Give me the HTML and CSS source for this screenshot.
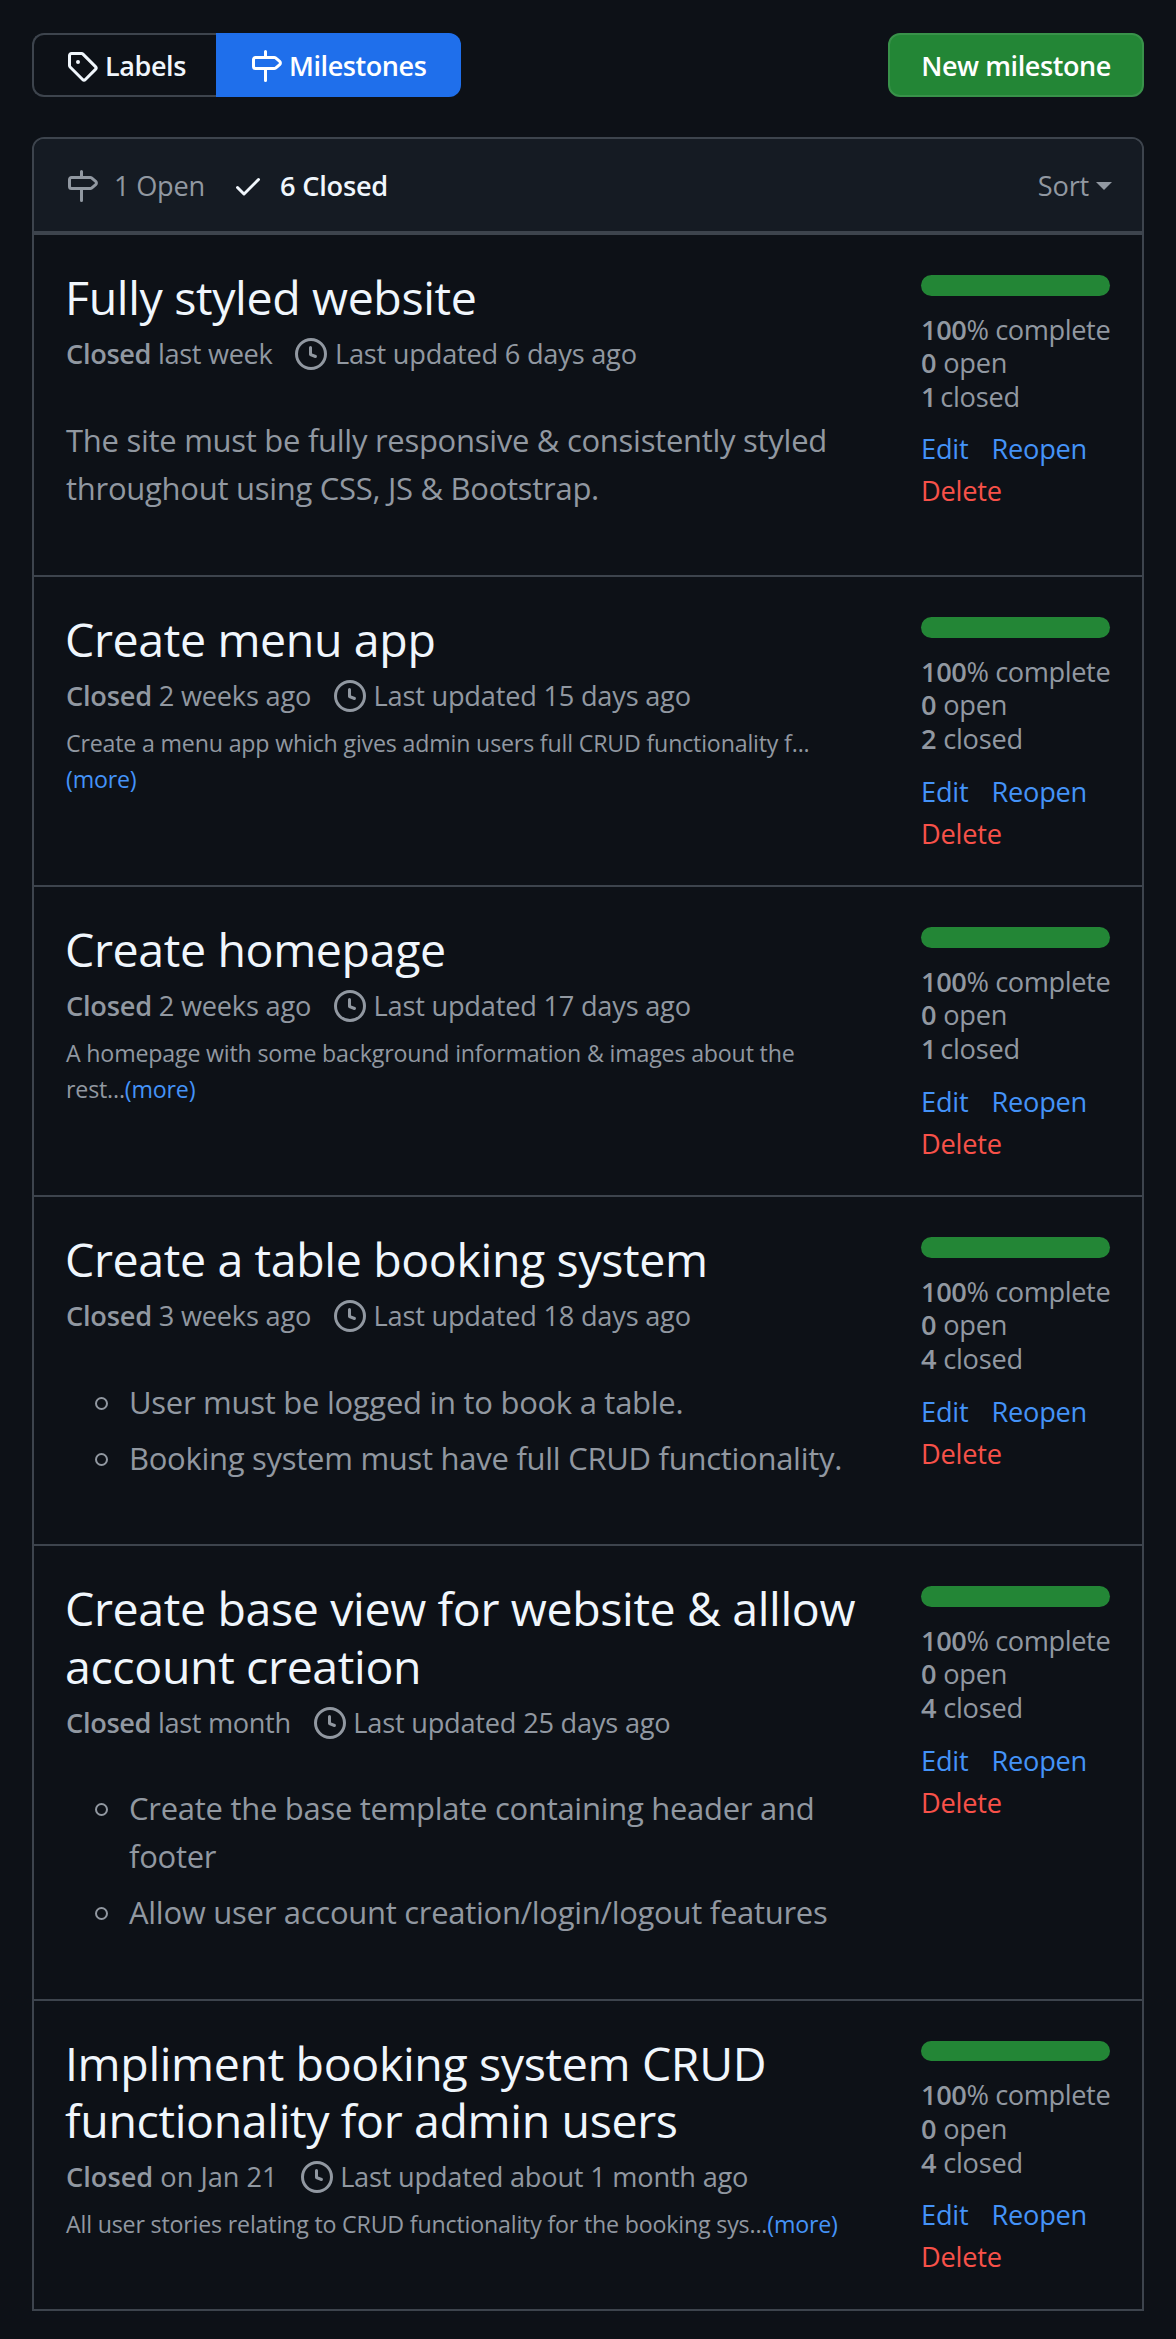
FILE: index.html
```html
<!DOCTYPE html>
<html lang="en">
<head>
<meta charset="utf-8">
<title>Milestones</title>
<link rel="stylesheet" href="styles.css">
</head>
<body>
<svg class="sprite" aria-hidden="true">
  <symbol id="tag" viewBox="0 0 16 16"><path d="M1 7.775V2.75C1 1.784 1.784 1 2.75 1h5.025c.464 0 .91.184 1.238.513l6.25 6.25a1.75 1.75 0 0 1 0 2.474l-5.026 5.026a1.75 1.75 0 0 1-2.474 0l-6.25-6.25A1.752 1.752 0 0 1 1 7.775Zm1.5 0c0 .066.026.13.073.177l6.25 6.25a.25.25 0 0 0 .354 0l5.025-5.025a.25.25 0 0 0 0-.354l-6.25-6.25a.25.25 0 0 0-.177-.073H2.75a.25.25 0 0 0-.25.25ZM6 5a1 1 0 1 1 0 2 1 1 0 0 1 0-2Z"/></symbol>
  <symbol id="milestone" viewBox="0 0 16 16"><path d="M7.75 0a.75.75 0 0 1 .75.75V3h3.634c.414 0 .814.147 1.13.414l2.07 1.75a1.75 1.75 0 0 1 0 2.672l-2.07 1.75a1.75 1.75 0 0 1-1.13.414H8.5v5.25a.75.75 0 0 1-1.5 0V10H2.75A1.75 1.75 0 0 1 1 8.25v-3.5C1 3.784 1.784 3 2.75 3H7V.75A.75.75 0 0 1 7.75 0Zm4.384 8.5a.25.25 0 0 0 .161-.06l2.07-1.75a.248.248 0 0 0 0-.38l-2.07-1.75a.25.25 0 0 0-.161-.06H2.75a.25.25 0 0 0-.25.25v3.5c0 .138.112.25.25.25h9.384Z"/></symbol>
  <symbol id="check" viewBox="0 0 16 16"><path d="M13.78 4.22a.75.75 0 0 1 0 1.06l-7.25 7.25a.75.75 0 0 1-1.06 0L2.22 9.28a.751.751 0 0 1 .018-1.042.751.751 0 0 1 1.042-.018L6 10.94l6.72-6.72a.75.75 0 0 1 1.06 0Z"/></symbol>
  <symbol id="clock" viewBox="0 0 16 16"><path d="M8 0a8 8 0 1 1 0 16A8 8 0 0 1 8 0ZM1.5 8a6.5 6.5 0 1 0 13 0 6.5 6.5 0 0 0-13 0Zm7-3.25v2.992l2.028.812a.75.75 0 0 1-.557 1.392l-2.5-1A.751.751 0 0 1 7 8.25v-3.5a.75.75 0 0 1 1.5 0Z"/></symbol>
</svg>

<header class="toolbar">
  <nav class="subnav">
    <a class="subnav-item"><svg class="icon"><use href="#tag"/></svg><span>Labels</span></a>
    <a class="subnav-item selected"><svg class="icon"><use href="#milestone"/></svg><span>Milestones</span></a>
  </nav>
  <a class="new-button">New milestone</a>
</header>

<main class="box">
  <div class="box-header">
    <a class="state open"><svg class="icon"><use href="#milestone"/></svg><span>1 Open</span></a>
    <a class="state closed"><svg class="icon"><use href="#check"/></svg><span>6 Closed</span></a>
    <a class="sort"><span>Sort</span><i class="caret"></i></a>
  </div>

  <section class="row">
    <div class="info">
      <h2>Fully styled website</h2>
      <div class="meta"><span class="tight"><b>Closed</b> last week</span><svg class="icon"><use href="#clock"/></svg><span>Last updated 6 days ago</span></div>
      <div class="body"><p>The site must be fully responsive &amp; consistently styled throughout using CSS, JS &amp; Bootstrap.</p></div>
    </div>
    <div class="stats">
      <div class="progress"></div>
      <div class="percent"><b>100</b>% complete</div>
      <div><b>0</b> open</div>
      <div><b class="one">1</b> closed</div>
      <div class="actions"><a>Edit</a><a>Reopen</a><a class="delete">Delete</a></div>
    </div>
  </section>

  <section class="row">
    <div class="info">
      <h2>Create menu app</h2>
      <div class="meta"><span><b>Closed</b> 2 weeks ago</span><svg class="icon"><use href="#clock"/></svg><span>Last updated 15 days ago</span></div>
      <p class="short">Create a menu app which gives admin users full CRUD functionality f...<br><a>(more)</a></p>
    </div>
    <div class="stats">
      <div class="progress"></div>
      <div class="percent"><b>100</b>% complete</div>
      <div><b>0</b> open</div>
      <div><b>2</b> closed</div>
      <div class="actions"><a>Edit</a><a>Reopen</a><a class="delete">Delete</a></div>
    </div>
  </section>

  <section class="row">
    <div class="info">
      <h2>Create homepage</h2>
      <div class="meta"><span><b>Closed</b> 2 weeks ago</span><svg class="icon"><use href="#clock"/></svg><span>Last updated 17 days ago</span></div>
      <p class="short">A homepage with some background information &amp; images about the<br>rest...<a>(more)</a></p>
    </div>
    <div class="stats">
      <div class="progress"></div>
      <div class="percent"><b>100</b>% complete</div>
      <div><b>0</b> open</div>
      <div><b class="one">1</b> closed</div>
      <div class="actions"><a>Edit</a><a>Reopen</a><a class="delete">Delete</a></div>
    </div>
  </section>

  <section class="row">
    <div class="info">
      <h2>Create a table booking system</h2>
      <div class="meta"><span><b>Closed</b> 3 weeks ago</span><svg class="icon"><use href="#clock"/></svg><span>Last updated 18 days ago</span></div>
      <ul class="body">
        <li><span>User must be logged in to book a table.</span></li>
        <li><span>Booking system must have full CRUD functionality.</span></li>
      </ul>
    </div>
    <div class="stats">
      <div class="progress"></div>
      <div class="percent"><b>100</b>% complete</div>
      <div><b>0</b> open</div>
      <div><b>4</b> closed</div>
      <div class="actions"><a>Edit</a><a>Reopen</a><a class="delete">Delete</a></div>
    </div>
  </section>

  <section class="row">
    <div class="info">
      <h2>Create base view for website &amp; alllow account creation</h2>
      <div class="meta"><span class="tight"><b>Closed</b> last month</span><svg class="icon"><use href="#clock"/></svg><span>Last updated 25 days ago</span></div>
      <ul class="body">
        <li><span>Create the base template containing header and footer</span></li>
        <li><span>Allow user account creation/login/logout features</span></li>
      </ul>
    </div>
    <div class="stats">
      <div class="progress"></div>
      <div class="percent"><b>100</b>% complete</div>
      <div><b>0</b> open</div>
      <div><b>4</b> closed</div>
      <div class="actions"><a>Edit</a><a>Reopen</a><a class="delete">Delete</a></div>
    </div>
  </section>

  <section class="row">
    <div class="info">
      <h2>Impliment booking system CRUD functionality for admin users</h2>
      <div class="meta"><span class="loose"><b>Closed</b> on Jan 21</span><svg class="icon"><use href="#clock"/></svg><span>Last updated about 1 month ago</span></div>
      <p class="short">All user stories relating to CRUD functionality for the booking sys...<a>(more)</a></p>
    </div>
    <div class="stats">
      <div class="progress"></div>
      <div class="percent"><b>100</b>% complete</div>
      <div><b>0</b> open</div>
      <div><b>4</b> closed</div>
      <div class="actions"><a>Edit</a><a>Reopen</a><a class="delete">Delete</a></div>
    </div>
  </section>
</main>
</body>
</html>
```
FILE: styles.css
```css
*, *::before { box-sizing: border-box; }

body {
  margin: 0;
  min-height: 2339px;
  padding: 33px 32px 0;
  background: #0d1117;
  color: #9198a1;
  font-family: "Open Sans", "Noto Sans", sans-serif;
  font-size: 27.2px;
  line-height: 42px;
  letter-spacing: -0.22px;
}

h2, p, ul { margin: 0; padding: 0; font-weight: 400; }
b { font-weight: 600; }
.sprite { display: none; }
.icon { width: 32px; height: 32px; flex: none; fill: currentColor; }

.toolbar {
  display: flex;
  justify-content: space-between;
  height: 64px;
  margin-bottom: 40px;
  font-size: 27px;
  font-weight: 600;
  letter-spacing: -0.42px;
}
.subnav { display: flex; }
.subnav-item {
  display: flex;
  align-items: center;
  gap: 7px;
  width: 184px;
  padding: 2px 0 0 32px;
  border: 2px solid #3d444d;
  border-right: 0;
  border-radius: 12px 0 0 12px;
  color: #f0f6fc;
}
.subnav-item.selected {
  width: 245px;
  padding-left: 34px;
  border: 0;
  border-radius: 0 12px 12px 0;
  background: #1f6feb;
  color: #fff;
}
.new-button {
  display: flex;
  align-items: center;
  justify-content: center;
  width: 256px;
  padding-top: 1px;
  border: 2px solid #39924a;
  border-radius: 12px;
  background: #238636;
  color: #fff;
}

.box {
  border: 2px solid #3d444d;
  border-radius: 12px 12px 0 0;
}
.box-header {
  display: flex;
  align-items: center;
  height: 94px;
  padding: 2px 30px 0 32px;
  border-radius: 10px 10px 0 0;
  border-bottom: 2px solid #3d444d;
  background: #151b23;
}
.state { display: flex; align-items: center; gap: 16px; width: 166px; }
.state.closed { color: #f0f6fc; font-weight: 600; }
.sort { display: flex; align-items: center; gap: 7px; margin-left: auto; }
.caret {
  border: 8px solid transparent;
  border-top-color: currentColor;
  border-bottom: 0;
}

.row {
  display: flex;
  justify-content: space-between;
  padding: 34px 32px 30.6px;
  border-top: 2px solid #3d444d;
}
.info { width: 800px; }
.info h2 {
  margin-left: -1px;
  color: #f0f6fc;
  font-size: 46.5px;
  line-height: 57.6px;
  letter-spacing: -0.37px;
}
.meta { display: flex; align-items: center; height: 42px; margin-top: 6.4px; }
.meta .icon { margin: 0 7.5px 0 23px; }
.tight { letter-spacing: -0.34px; }
.loose { letter-spacing: 0; }
.short { margin-top: 7.6px; font-size: 23.2px; line-height: 36px; letter-spacing: -0.18px; }
.short a { color: #4493f8; }
.body {
  padding: 40.6px 0 33px;
  font-size: 31px;
  line-height: 48px;
  letter-spacing: -0.28px;
}
ul.body { padding-bottom: 31.8px; }
.body li { display: flex; list-style: none; }
.body li + li { margin-top: 8px; }
.body li::before {
  content: "";
  flex: none;
  width: 13px;
  height: 13px;
  margin: 19px 21px 0 29px;
  border: 2px solid #9198a1;
  border-radius: 50%;
}

.stats { width: 189px; padding-top: 6px; line-height: 33.6px; white-space: nowrap; }
.progress {
  height: 20.5px;
  margin-bottom: 17px;
  border-radius: 10.5px;
  background: #238636;
}
.percent { letter-spacing: -0.4px; }
.one { margin-right: -3px; }
.actions {
  display: flex;
  flex-wrap: wrap;
  column-gap: 23px;
  margin-top: 15.2px;
  line-height: 42px;
  color: #4493f8;
}
.delete { color: #f85149; }
```
